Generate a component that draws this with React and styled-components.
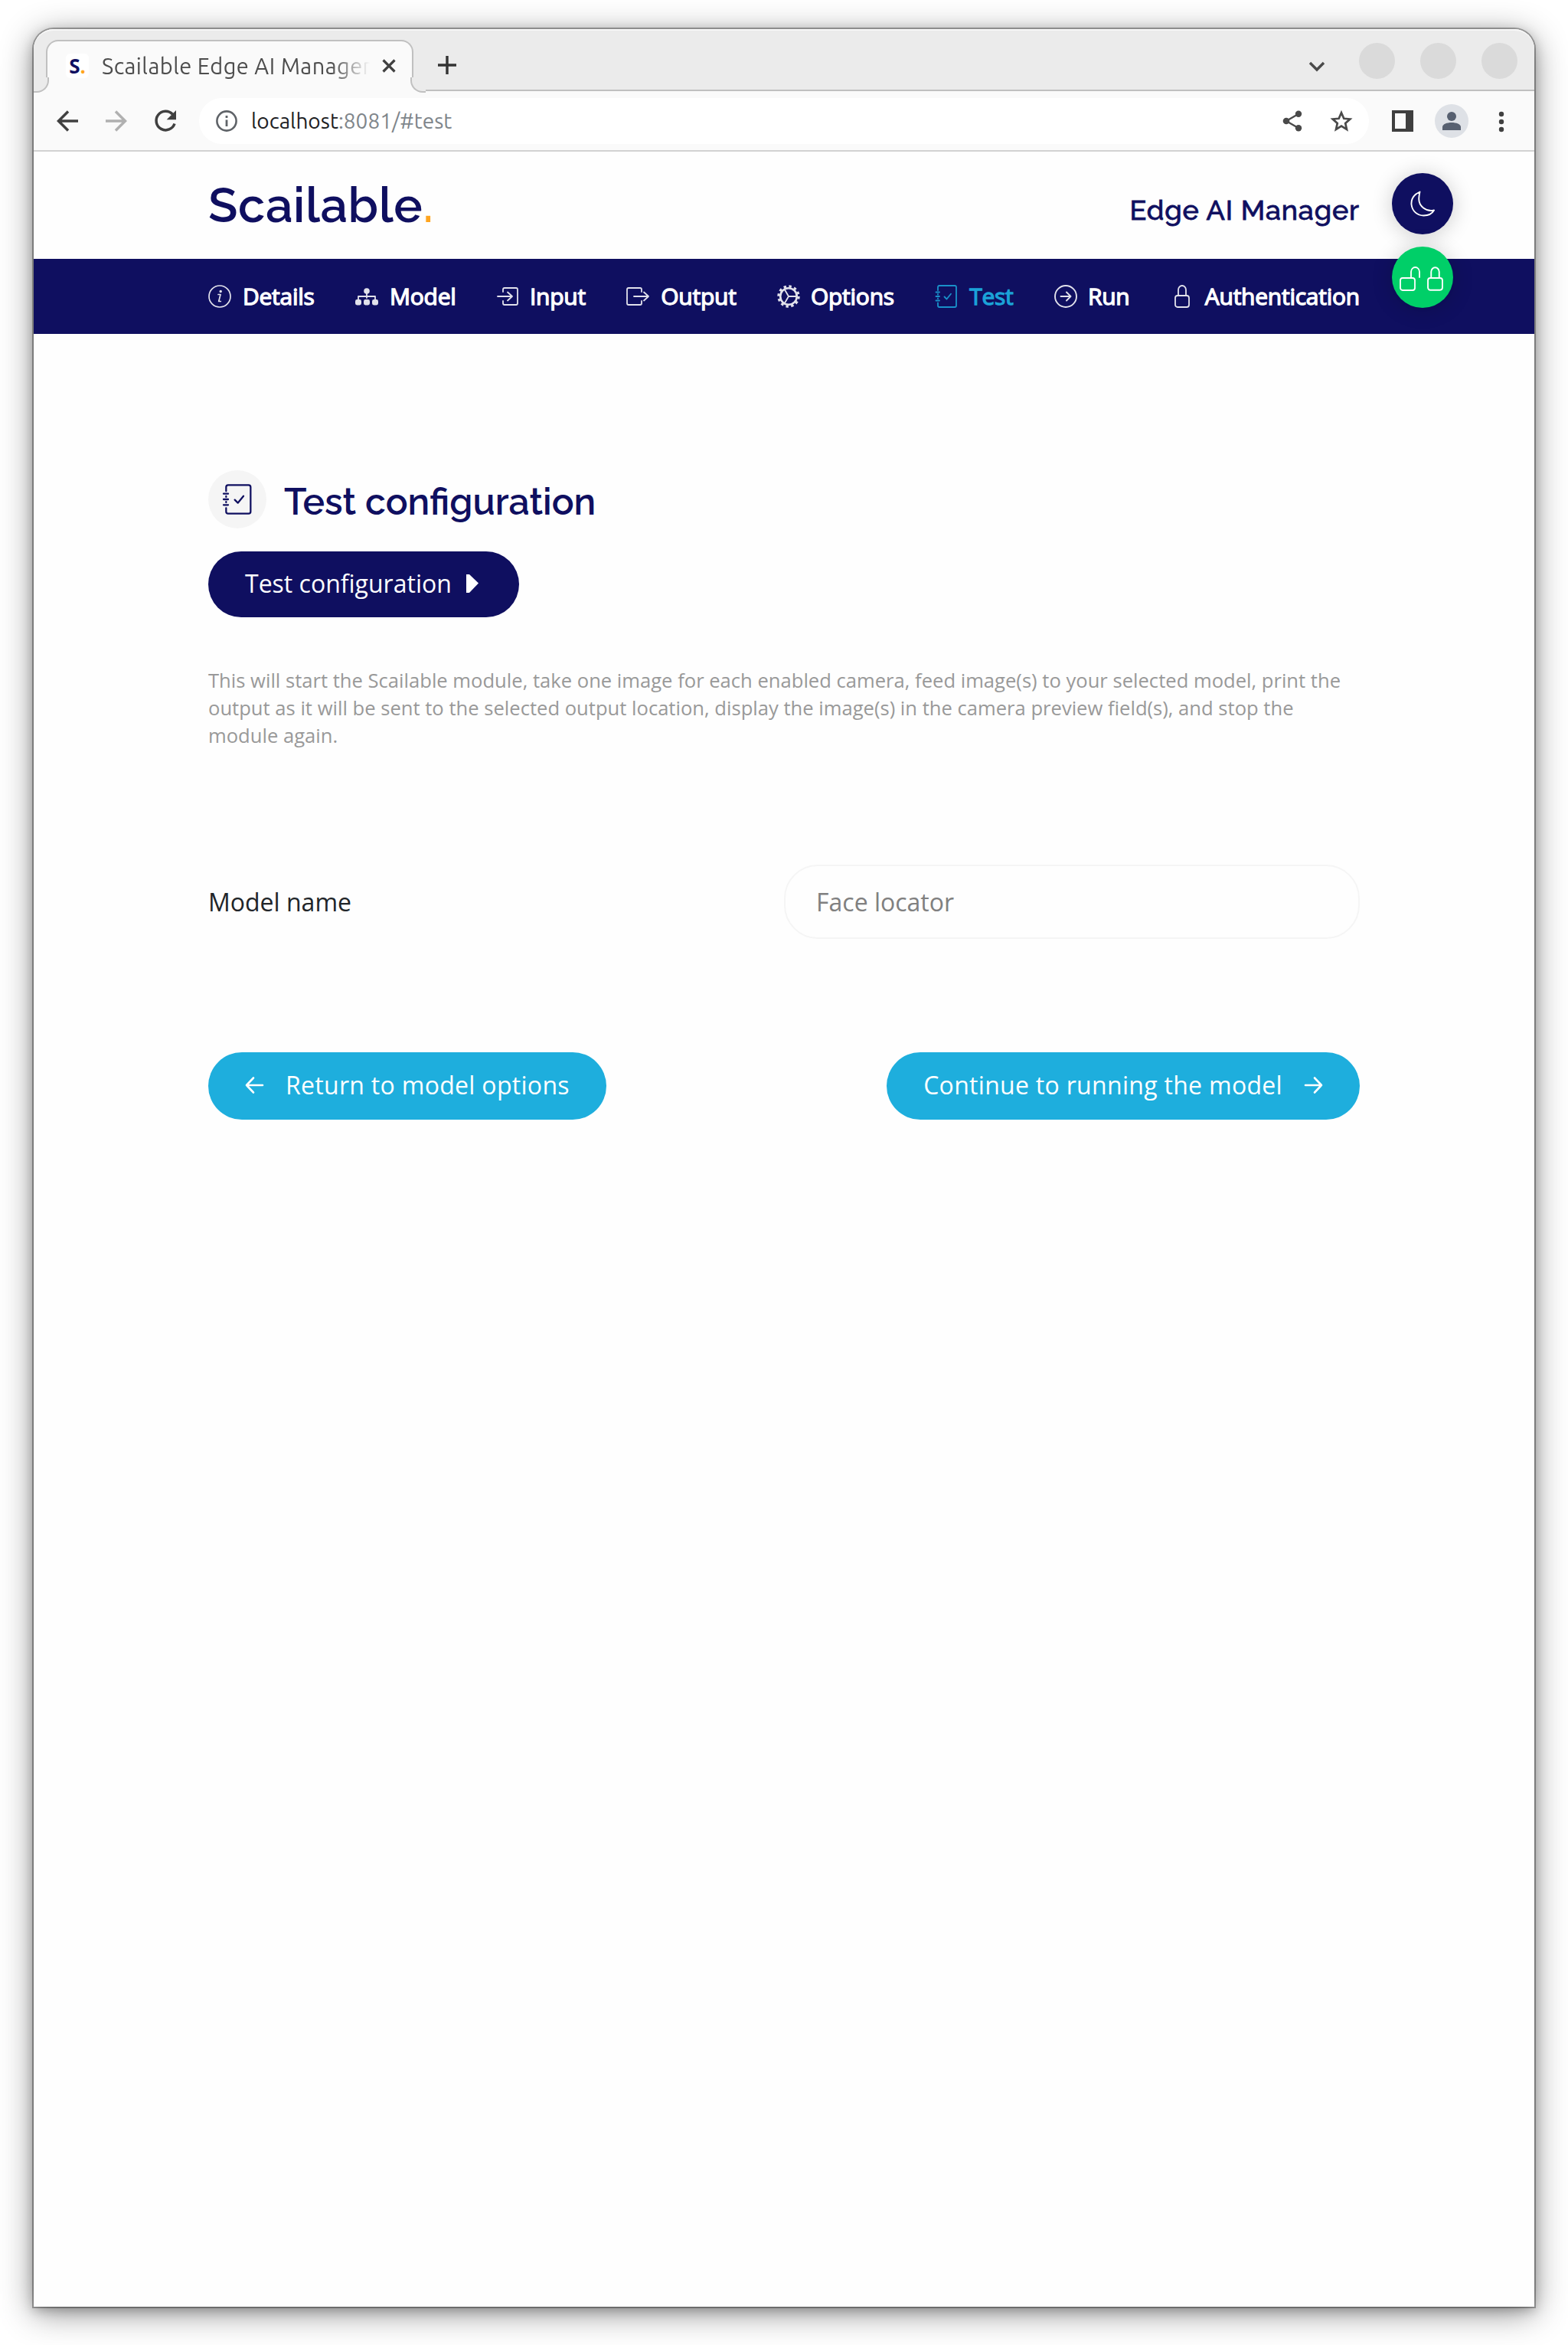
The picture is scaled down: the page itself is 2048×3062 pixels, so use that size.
import React from "react";
import styled, { createGlobalStyle } from "styled-components";

const NAVY = "#0f0f60";
const CYAN = "#1eaedd";
const sans = '"Open Sans", "Noto Sans", sans-serif';
const display = 'Raleway, Lato, sans-serif';
const chrome = 'Ubuntu, "Noto Sans", sans-serif';

const GlobalStyle = createGlobalStyle`
  * { box-sizing: border-box; }
  body { margin: 0; background: #fff; font-family: ${sans}; }
  h1, h2, p { margin: 0; font-weight: 400; }
  button { font: inherit; border: 0; margin: 0; }
  svg { display: block; flex: none; overflow: visible; }
`;

const Desktop = styled.div`
  height: 3062px;
  padding: 38px 44px 50px 44px;
`;

const Window = styled.div`
  height: 2974px;
  display: flex;
  flex-direction: column;
  background: #fefefe;
  border-radius: 26px 26px 0 0;
  box-shadow: 0 0 0 2px rgba(0, 0, 0, 0.3), 0 4px 16px rgba(0, 0, 0, 0.26),
    0 8px 44px rgba(0, 0, 0, 0.44);
`;

const TabStrip = styled.div`
  height: 81px;
  flex: none;
  display: flex;
  background: #ebebeb;
  border-bottom: 2px solid #c0c0c0;
  border-top: 2px solid #f7f7f7;
  border-radius: 26px 26px 0 0;
`;

const Tab = styled.div`
  position: relative;
  width: 480px;
  height: 69px;
  margin: 12px 0 0 16px;
  padding: 0 20px 3px 24px;
  display: flex;
  align-items: center;
  background: #fafafa;
  border: 2px solid #c0c0c0;
  border-bottom: 0;
  border-radius: 16px 16px 0 0;
  &::before,
  &::after {
    content: "";
    position: absolute;
    bottom: 0;
    width: 18px;
    height: 18px;
    border-bottom: 2px solid #c0c0c0;
  }
  &::before {
    left: -18px;
    border-right: 2px solid #c0c0c0;
    border-radius: 0 0 16px 0;
    background: #ebebeb;
    box-shadow: 4px 4px 0 1px #fafafa;
    clip-path: inset(0);
  }
  &::after {
    right: -18px;
    border-left: 2px solid #c0c0c0;
    border-radius: 0 0 0 16px;
    background: #ebebeb;
    box-shadow: -4px 4px 0 1px #fafafa;
    clip-path: inset(0);
  }
`;

const Favicon = styled.span`
  width: 30px;
  height: 32px;
  display: flex;
  align-items: center;
  justify-content: center;
  background: #fff;
  border-radius: 6px;
  font: 700 26px/32px ${sans};
  color: ${NAVY};
`;

const Dot = styled.span`
  color: #ffa51f;
`;

const TabTitle = styled.span`
  width: 351px;
  margin: 0 15px 0 17px;
  white-space: nowrap;
  font: 29px/40px ${chrome};
  letter-spacing: 0.45px;
  color: #4d4d4d;
  -webkit-mask-image: linear-gradient(90deg, #000 300px, transparent 350px);
  mask-image: linear-gradient(90deg, #000 300px, transparent 350px);
`;

const NewTab = styled.div`
  display: flex;
  align-items: center;
  padding: 13px 0 0 31px;
`;

const WindowControls = styled.div`
  margin-left: auto;
  display: flex;
  align-items: center;
  gap: 33px;
  padding: 2px 22px 0 0;
`;

const ControlDot = styled.span`
  width: 47px;
  height: 47px;
  border-radius: 50%;
  background: #dadada;
`;

const ChevronSlot = styled.span`
  padding: 15px 12px 0 0;
`;

const Toolbar = styled.div`
  height: 79px;
  flex: none;
  display: flex;
  align-items: center;
  padding: 1px 30px 0 30px;
  background: #fafafa;
  border-bottom: 2px solid #d2d2d2;
`;

const NavButtons = styled.div`
  display: flex;
  gap: 36px;
`;

const AddressBar = styled.div`
  flex: 1;
  height: 60px;
  margin: 0 30px;
  padding: 0 22px;
  display: flex;
  align-items: center;
  background: #fff;
  border-radius: 30px;
`;

const Url = styled.span`
  flex: 1;
  margin-left: 18px;
  font: 28px/40px ${chrome};
  color: #80868b;
  b {
    font-weight: 400;
    color: #202124;
  }
`;

const AddressActions = styled.div`
  display: flex;
  gap: 36px;
`;

const BrowserActions = styled.div`
  display: flex;
  align-items: center;
  gap: 28px;
`;

const Header = styled.header`
  position: relative;
  height: 140px;
  flex: none;
  display: flex;
  justify-content: space-between;
  padding: 0 228px;
`;

const Logo = styled.h1`
  padding-top: 32px;
  font: 600 63px/76px ${display};
  letter-spacing: 0.6px;
  color: ${NAVY};
`;

const Product = styled.span`
  padding-top: 52px;
  font: 500 36px/48px ${display};
  letter-spacing: 0.85px;
  color: ${NAVY};
  -webkit-text-stroke: 0.8px ${NAVY};
`;

const Floating = styled.div`
  position: absolute;
  z-index: 1;
  top: 28px;
  right: 106px;
  display: grid;
  gap: 16px;
`;

const RoundButton = styled.button`
  width: 80px;
  height: 80px;
  padding: ${(p) => p.$drop || 0}px ${(p) => p.$drop || 0}px 0 0;
  display: flex;
  align-items: center;
  justify-content: center;
  gap: 9px;
  border-radius: 50%;
  background: ${(p) => p.$color};
  color: #fff;
  box-shadow: 0 2px 28px rgba(0, 0, 0, 0.2);
`;

const NavBar = styled.nav`
  height: 97.5px;
  flex: none;
  display: flex;
  align-items: center;
  justify-content: space-between;
  padding: 1px 228px 0;
  background: ${NAVY};
`;

const NavItem = styled.a`
  display: flex;
  align-items: center;
  gap: ${(p) => p.$gap}px;
  font: 400 30px/42px ${sans};
  letter-spacing: -0.25px;
  -webkit-text-stroke: 1.3px currentColor;
  color: ${(p) => (p.$active ? "#1ba3d8" : "#fff")};
  svg {
    opacity: 0.88;
  }
  &:last-child {
    margin-left: 5px;
  }
`;

const Main = styled.main`
  padding: 178.5px 228px 0;
`;

const TitleRow = styled.div`
  display: flex;
  align-items: center;
  gap: 23px;
`;

const IconDisc = styled.span`
  width: 76px;
  height: 76px;
  display: flex;
  align-items: center;
  justify-content: center;
  border-radius: 50%;
  background: #f5f5f5;
  color: ${NAVY};
`;

const Title = styled.h2`
  font: 600 48px/60px ${display};
  padding-top: 6px;
  color: ${NAVY};
`;

const Pill = styled.button`
  height: ${(p) => p.$height || 88}px;
  padding: 0 48px 2px;
  display: inline-flex;
  align-items: center;
  gap: ${(p) => p.$gap}px;
  border-radius: 44px;
  background: ${(p) => p.$color};
  color: #fff;
  font: 400 32px/44px ${sans};
  letter-spacing: ${(p) => p.$track || 0}px;
  white-space: nowrap;
`;

const ActionRow = styled.div`
  display: flex;
  margin-top: 30px;
`;

const Hint = styled.p`
  margin-top: 65px;
  font: 25.6px/36px ${sans};
  color: #999;
`;

const Field = styled.label`
  display: grid;
  grid-template-columns: 1fr 1fr;
  align-items: center;
  margin-top: 150px;
  font: 32px/44px ${sans};
  color: #212529;
`;

const FieldLabel = styled.span`
  padding-top: 1px;
`;

const TextInput = styled.input`
  width: 100%;
  height: 97px;
  padding: 0 40px 1px;
  border: 2px solid #f5f5f5;
  border-radius: 44px;
  background: transparent;
  font: 32px/44px ${sans};
  color: #808080;
  outline: 0;
`;

const Footer = styled.div`
  display: flex;
  justify-content: space-between;
  margin-top: 148px;
`;

const Line = ({ w = 30, h = w, vb, sw = 2, children }) => (
  <svg width={w} height={h} viewBox={vb || `0 0 ${w} ${h}`} fill="none" stroke="currentColor" strokeWidth={sw} strokeLinecap="round" strokeLinejoin="round">
    {children}
  </svg>
);

const InfoIcon = () => (
  <Line sw={1.7}>
    <circle cx="15" cy="15" r="14" />
    <path d="M13 12.5h3l-2.3 9h2.6" />
    <circle cx="16.2" cy="8.4" r=".9" fill="currentColor" />
  </Line>
);
const TreeIcon = () => (
  <Line sw={1.8}>
    <path d="M15 8v9M4 20v-5h22v5" />
    <g fill="currentColor" stroke="none">
      <circle cx="15" cy="8" r="3.8" />
      <rect x="0" y="19" width="8" height="7.5" rx="2.4" />
      <rect x="11" y="19" width="8" height="7.5" rx="2.4" />
      <rect x="22" y="19" width="8" height="7.5" rx="2.4" />
    </g>
  </Line>
);
const InputIcon = () => (
  <Line w={28} h={30} sw={1.8}>
    <path d="M8 9V6Q8 4 10 4H25Q27 4 27 6V24Q27 26 25 26H10Q8 26 8 24V21M1 15H20M14 9.500L20 15L14 20.500" />
  </Line>
);
const OutputIcon = () => (
  <Line w={30} h={30} sw={1.8}>
    <path d="M20 9V6Q20 4 18 4H3Q1 4 1 6V24Q1 26 3 26H18Q20 26 20 24V21M10 15H29M23 9.500L29 15L23 20.500" />
  </Line>
);
const GearIcon = () => (
  <Line w={30} h={30} sw={1.8}>
    <circle cx="15" cy="15" r="10.800" strokeWidth="2.600" />
    <circle cx="15" cy="15" r="13.100" strokeWidth="3.200" strokeDasharray="3.400 3.459" strokeLinecap="butt" />
    <path d="M15 15H26M15 15L9.500 5.500M15 15L9.500 24.500" />
  </Line>
);
const JournalIcon = ({ size = 30, sw = 1.8 }) => (
  <Line w={size} vb="0 0 30 30" sw={sw}>
    <path d="M4 7V3Q4 1 6 1H26Q28 1 28 3V27Q28 29 26 29H6Q4 29 4 27V23.500M4 12.700V12M4 18V17.300M1.500 9.500H6M1.500 15H6M1.500 20.500H6M12.500 15.500L15.500 18.500L21 11.800" />
  </Line>
);
const RunIcon = () => (
  <Line sw={1.9}>
    <circle cx="15" cy="15" r="14" />
    <path d="M8.500 15H21.500M16 9.500L21.500 15L16 20.500" />
  </Line>
);
const LockIcon = ({ w = 20, h = 30 }) => (
  <Line w={w} h={h} vb="0 0 20 30" sw={1.8}>
    <rect x="1" y="14" width="18" height="15" rx="3" />
    <path d="M5 14V6.500A5 5.500 0 0 1 15 6.500V14" />
  </Line>
);
const UnlockIcon = () => (
  <Line w={27} h={32} sw={1.8}>
    <rect x="1" y="15" width="19" height="16" rx="3" />
    <path d="M15 15V7A5.500 6 0 0 1 26 7V14" />
  </Line>
);
const MoonIcon = () => (
  <Line w={32} h={34} sw={1.900}>
    <path d="M12.500 1.500C4.500 5 1 11 1.500 18C2.500 27 9.500 32.500 17.500 32.500C24 32.500 28.500 30 31 25.500C21 28 10.500 20.500 11.300 9.500C11.400 6.500 12 3.800 12.500 1.500Z" />
  </Line>
);
const Arrow = ({ flip }) => (
  <svg width="24" height="24" viewBox="0 0 24 24" fill="none" stroke="currentColor" strokeWidth="2.600" strokeLinecap="round" strokeLinejoin="round">
    <path d={flip ? "M23 12H2M11 2.500L2 12L11 21.500" : "M1 12H22M13 2.500L22 12L13 21.500"} />
  </svg>
);
const BrowserArrow = ({ color, flip }) => (
  <svg width="28" height="28" viewBox="0 0 28 28" fill="none" stroke={color} strokeWidth="3.500">
    <path d={flip ? "M0 14H25M13 1.500L25.500 14L13 26.500" : "M28 14H3M15 1.500L2.500 14L15 26.500"} />
  </svg>
);

const navItems = [
  { label: "Details", icon: InfoIcon, gap: 15 },
  { label: "Model", icon: TreeIcon, gap: 15 },
  { label: "Input", icon: InputIcon, gap: 15 },
  { label: "Output", icon: OutputIcon, gap: 15 },
  { label: "Options", icon: GearIcon, gap: 14 },
  { label: "Test", icon: JournalIcon, gap: 15, active: true },
  { label: "Run", icon: RunIcon, gap: 14 },
  { label: "Authentication", icon: LockIcon, gap: 20 },
];

export default function App() {
  return (
    <Desktop>
      <GlobalStyle />
      <Window>
        <TabStrip>
          <Tab>
            <Favicon>S<Dot>.</Dot></Favicon>
            <TabTitle>Scailable Edge AI Manager</TabTitle>
            <svg width="18" height="18" viewBox="0 0 18 18" stroke="#404040" strokeWidth="3.200"><path d="M1.500 1.500L16.500 16.500M16.500 1.500L1.500 16.500" /></svg>
          </Tab>
          <NewTab>
            <svg width="26" height="26" viewBox="0 0 26 26" stroke="#333" strokeWidth="3.400"><path d="M13 1V25M1 13H25" /></svg>
          </NewTab>
          <WindowControls>
            <ChevronSlot>
              <svg width="20" height="12" viewBox="0 0 20 12" fill="none" stroke="#4a4a4a" strokeWidth="3.400"><path d="M1 1L10 10L19 1" /></svg>
            </ChevronSlot>
            <ControlDot />
            <ControlDot />
            <ControlDot />
          </WindowControls>
        </TabStrip>
        <Toolbar>
          <NavButtons>
            <BrowserArrow color="#404040" />
            <BrowserArrow color="#b0b0b0" flip />
            <svg width="28" height="28" viewBox="0 0 28 28">
              <path d="M23.400 5.200A12.300 12.300 0 1 0 26 17.500" fill="none" stroke="#404040" strokeWidth="3.500" />
              <path d="M28 0V12.300H15.700Z" fill="#404040" />
            </svg>
          </NavButtons>
          <AddressBar>
            <svg width="28" height="28" viewBox="0 0 28 28">
              <circle cx="14" cy="14" r="12.600" fill="none" stroke="#5f6368" strokeWidth="2.600" />
              <path d="M12.600 12.500h2.800v8.500h-2.800zM12.600 7h2.800v2.900h-2.800z" fill="#5f6368" />
            </svg>
            <Url><b>localhost</b>:8081/#test</Url>
            <AddressActions>
              <svg width="28" height="28" viewBox="0 0 28 28" fill="#4a4a4a">
                <path d="M6 14L22 4.800M6 14L22 23.200" stroke="#4a4a4a" strokeWidth="2.400" />
                <circle cx="6" cy="14" r="4.300" /><circle cx="22" cy="4.800" r="4.200" /><circle cx="22" cy="23.200" r="4.200" />
              </svg>
              <svg width="28" height="28" viewBox="0 0 28 28" fill="none" stroke="#4a4a4a" strokeWidth="2.700">
                <path d="M14 3.200L17.300 10.800L25.300 11.500L19.200 16.900L21 25L14 20.700L7 25L8.800 16.900L2.700 11.500L10.700 10.800Z" />
              </svg>
            </AddressActions>
          </AddressBar>
          <BrowserActions>
            <svg width="28" height="28" viewBox="0 0 28 28"><path fillRule="evenodd" fill="#3f3f3f" d="M0 0H28V28H0ZM4 4V24H18V4Z" /></svg>
            <svg width="44" height="44" viewBox="0 0 44 44">
              <circle cx="22" cy="22" r="22" fill="#dee1e6" />
              <g fill="#576070"><circle cx="22" cy="16" r="6" /><path d="M10 34V30C10 26 16 24 22 24S34 26 34 30V34Z" /></g>
            </svg>
            <svg width="28" height="28" viewBox="0 0 28 28" fill="#404040"><circle cx="15" cy="5" r="3.200" /><circle cx="15" cy="15" r="3.200" /><circle cx="15" cy="25" r="3.200" /></svg>
          </BrowserActions>
        </Toolbar>
        <Header>
          <Logo>Scailable<Dot>.</Dot></Logo>
          <Product>Edge AI Manager</Product>
          <Floating>
            <RoundButton $color={NAVY} aria-label="Dark mode"><MoonIcon /></RoundButton>
            <RoundButton $color="#00cf68" $drop={4} aria-label="Lock"><UnlockIcon /><LockIcon w={21} h={32} /></RoundButton>
          </Floating>
        </Header>
        <NavBar>
          {navItems.map(({ label, icon: Icon, gap, active }) => (
            <NavItem key={label} $gap={gap} $active={active}>
              <Icon />
              {label}
            </NavItem>
          ))}
        </NavBar>
        <Main>
          <TitleRow>
            <IconDisc><JournalIcon size={40} sw={1.700} /></IconDisc>
            <Title>Test configuration</Title>
          </TitleRow>
          <ActionRow>
            <Pill $color={NAVY} $height={86} $gap={18}>
              Test configuration
              <svg width="22" height="26" viewBox="0 0 22 26" fill="#fff"><path d="M1 1L5 1L17 12.500L5 25H1Z" /></svg>
            </Pill>
          </ActionRow>
          <Hint>
            This will start the Scailable module, take one image for each enabled camera, feed image(s) to your selected model, print the output as it will be sent to the selected output location, display the image(s) in the camera preview field(s), and stop the module again.
          </Hint>
          <Field>
            <FieldLabel>Model name</FieldLabel>
            <TextInput readOnly value="Face locator" />
          </Field>
          <Footer>
            <Pill $color={CYAN} $gap={29} $track={0.3}><Arrow flip />Return to model options</Pill>
            <Pill $color={CYAN} $gap={29} $track={0.3}>Continue to running the model<Arrow /></Pill>
          </Footer>
        </Main>
      </Window>
    </Desktop>
  );
}
